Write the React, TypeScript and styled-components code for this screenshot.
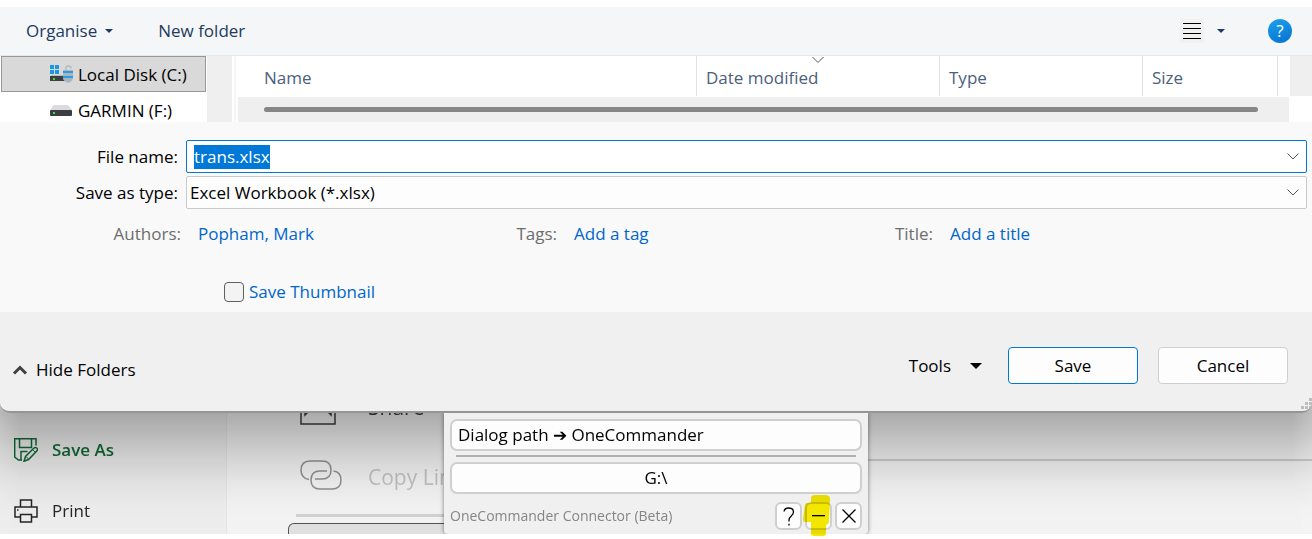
import React, { useEffect, useRef } from "react";
import styled, { createGlobalStyle } from "styled-components";

const GlobalStyle = createGlobalStyle`
  *, *::before, *::after { box-sizing: border-box; }
  body {
    margin: 0;
    background: #fff;
    color: #000;
    font: 17px/24px "Open Sans", "Noto Sans", sans-serif;
  }
  button, input, select { font: inherit; color: inherit; margin: 0; }
  svg { display: block; flex: none; }
`;

const Page = styled.div`
  padding: 7px 0 5px;
  overflow: hidden;
`;

/* ---------- Save dialog ---------- */

const Dialog = styled.form`
  position: relative;
  z-index: 1;
  border-bottom: 2px solid #959595;
  border-radius: 0 0 10px 10px;
  overflow: hidden;
`;

const Toolbar = styled.div`
  display: flex;
  align-items: center;
  height: 49px;
  padding: 0 20px 0 26px;
  background: #f4f6f8;
  border-bottom: 1px solid #e7e7e7;
  color: #1f3a60;
`;

const PlainButton = styled.button<{ $gap?: number }>`
  display: flex;
  align-items: center;
  gap: ${(p) => p.$gap ?? 8}px;
  padding: 0;
  border: 0;
  background: none;
  white-space: nowrap;
`;

const ToolbarLeft = styled.div`
  display: flex;
  gap: 45px;
  flex: 1;
`;

const ToolbarRight = styled.div`
  display: flex;
  align-items: center;
  gap: 43px;
`;

const ViewGlyph = styled.span`
  display: grid;
  place-items: center;
  width: 24px;
  height: 24px;
  background: #f1f1f1;
`;

const HelpButton = styled.button`
  width: 24px;
  height: 24px;
  padding: 0;
  border: 0;
  border-radius: 50%;
  background: linear-gradient(160deg, #1da1ea, #0671d3);
  color: #fff;
  line-height: 24px;
  text-align: center;
`;

const Browser = styled.div`
  display: flex;
  height: 66px;
  overflow: hidden;
  background: #fff;
`;

const FolderTree = styled.ul`
  flex: none;
  width: 207px;
  margin: 0;
  padding: 0 1px;
  list-style: none;
`;

const FolderItem = styled.li<{ $selected?: boolean }>`
  display: flex;
  align-items: center;
  gap: 4px;
  height: 36px;
  padding: 1px 0 0 48px;
  border: 1px solid ${(p) => (p.$selected ? "#979797" : "transparent")};
  background: ${(p) => (p.$selected ? "#d9d9d9" : "transparent")};
  white-space: nowrap;
`;

const TreeTrack = styled.div`
  flex: none;
  width: 25px;
  background: #efefef;
`;

const Splitter = styled.div`
  flex: none;
  width: 6px;
  border-left: 2px solid #fff;
  border-right: 2px solid #fff;
  background: #f6f6f6;
`;

const FileList = styled.div`
  flex: 1;
  display: flex;
  flex-direction: column;
`;

const HeaderRow = styled.div`
  display: flex;
  height: 41px;
  padding-bottom: 1px;
`;

const HeaderTable = styled.table`
  flex: 1;
  height: 40px;
  table-layout: fixed;
  border-collapse: collapse;
`;

const ColumnHead = styled.th<{ $width?: number; $indent?: number }>`
  position: relative;
  width: ${(p) => (p.$width ? `${p.$width}px` : "auto")};
  padding: 3px 0 0 ${(p) => p.$indent ?? 9}px;
  border-right: 1px solid #e2e2e2;
  color: #4c607c;
  font-weight: 400;
  text-align: left;
`;

const SortMark = styled.svg`
  position: absolute;
  top: 0;
  left: calc(50% - 6px);
`;

const HeaderEnd = styled.div<{ $shaded?: boolean }>`
  flex: none;
  width: ${(p) => (p.$shaded ? 22 : 12)}px;
  background: ${(p) => (p.$shaded ? "#efefef" : "#fff")};
`;

const ScrollTrack = styled.div`
  flex: 1;
  display: flex;
  align-items: center;
  margin-right: 23px;
  padding: 0 31px 0 26px;
  background: #efefef;
`;

const ScrollThumb = styled.div`
  flex: 1;
  height: 5px;
  border-radius: 3px;
  background: #868686;
`;

const Fields = styled.div`
  height: 190px;
  padding-top: 18px;
  background: #f9f9f9;
`;

const FieldRow = styled.div`
  display: flex;
  align-items: center;
  height: 33px;
  margin-bottom: 3px;
  padding-right: 5px;
`;

const FieldLabel = styled.label`
  flex: none;
  width: 178px;
  margin-right: 8px;
  text-align: right;
`;

const Combo = styled.div<{ $active?: boolean }>`
  flex: 1;
  display: flex;
  align-items: center;
  position: relative;
  height: 33px;
  border: 1px solid ${(p) => (p.$active ? "#0078d4" : "#cacaca")};
  border-radius: 2px;
  background: ${(p) => (p.$active ? "#fff" : "#fdfdfd")};
`;

const FileInput = styled.input`
  flex: 1;
  min-width: 0;
  padding: 0 7px;
  border: 0;
  outline: 0;
  background: none;
  &::selection { background: #0078d7; color: #fff; }
`;

const TypeSelect = styled.select`
  flex: 1;
  height: 31px;
  padding: 0 28px 0 3px;
  border: 0;
  outline: 0;
  appearance: none;
  background: none;
`;

const DropButton = styled.button`
  display: grid;
  place-items: center;
  width: 27px;
  height: 31px;
  padding: 0;
  border: 0;
  background: none;
`;

const DropMark = styled.span`
  position: absolute;
  top: 0;
  right: 0;
  display: grid;
  place-items: center;
  width: 27px;
  height: 31px;
  pointer-events: none;
`;

const Details = styled.dl`
  display: grid;
  grid-template-columns: repeat(3, 1fr);
  margin: 13px 184px 0 0;
`;

const Detail = styled.div`
  display: flex;
  gap: 17px;
`;

const DetailName = styled.dt`
  width: 181px;
  color: #6d6d6d;
  text-align: right;
`;

const DetailValue = styled.dd`
  margin: 0;
`;

const DetailLink = styled.a`
  color: #0066cc;
  text-decoration: none;
  white-space: nowrap;
`;

const ThumbnailOption = styled.label`
  display: flex;
  align-items: center;
  gap: 5px;
  margin: 34px 0 0 224px;
  color: #0066cc;
`;

const Checkbox = styled.input`
  width: 20px;
  height: 20px;
  appearance: none;
  border: 1px solid #606060;
  border-radius: 4px;
  background: #f3f3f3;
`;

const Footer = styled.div`
  display: flex;
  align-items: flex-end;
  justify-content: space-between;
  position: relative;
  height: 99px;
  padding: 0 24px 27px 12px;
  background: #f0f0f0;
`;

const FooterActions = styled.div`
  display: flex;
  gap: 20px;
`;

const ToolsButton = styled(PlainButton)`
  margin-right: 6px;
`;

const HideFolders = styled(PlainButton)`
  height: 29px;
`;

const ActionButton = styled.button<{ $primary?: boolean }>`
  width: 130px;
  height: 37px;
  padding: 0;
  border: 1px solid ${(p) => (p.$primary ? "#0078d4" : "#cfcfcf")};
  border-radius: 4px;
  background: #fdfdfd;
`;

const ResizeGrip = styled.svg`
  position: absolute;
  right: 0;
  bottom: 2px;
`;

/* ---------- Backstage view behind the dialog ---------- */

const Backstage = styled.div`
  position: relative;
  margin-top: -41px;
`;

const BackstageBody = styled.div`
  display: flex;
  position: relative;
  background: #f6f6f6;

  &::after {
    content: "";
    position: absolute;
    inset: 31px 0 0;
    background: linear-gradient(
      rgba(0, 0, 0, 0.3) 10px,
      rgba(0, 0, 0, 0.25) 25px,
      rgba(0, 0, 0, 0.15) 52px,
      rgba(0, 0, 0, 0.06) 80px,
      rgba(0, 0, 0, 0.02) 105px,
      rgba(0, 0, 0, 0.01)
    );
    mask-image: linear-gradient(90deg, rgba(0, 0, 0, 0.75), #000 20px, #000 calc(100% - 20px), rgba(0, 0, 0, 0.75));
    pointer-events: none;
  }
`;

const Sidebar = styled.nav`
  flex: none;
  display: flex;
  flex-direction: column;
  gap: 33px;
  width: 227px;
  height: 162px;
  padding: 64px 0 0 14px;
  overflow: hidden;
  background: #f0f0f0;
  border-right: 1px solid #e9e9e9;
`;

const SidebarLink = styled.a<{ $current?: boolean }>`
  display: flex;
  align-items: center;
  gap: 14px;
  height: 28px;
  color: ${(p) => (p.$current ? "#106a37" : "#262626")};
  font-weight: ${(p) => (p.$current ? 600 : 400)};
  text-decoration: none;
`;

const SharePane = styled.div`
  flex: none;
  width: 480px;
  padding-left: 61px;
  border-right: 2px solid #d0d0d0;
`;

const ShareOption = styled.button<{ $muted?: boolean }>`
  display: flex;
  align-items: center;
  gap: 26px;
  width: 100%;
  height: 70px;
  padding: 0 0 0 12px;
  border: 0;
  background: none;
  color: ${(p) => (p.$muted ? "#c4c4c4" : "#3c3c3c")};
  font-size: 21px;
`;

const ShareRule = styled.hr`
  height: 3px;
  margin: 2px 0 6px 8px;
  border: 0;
  background: #d4d4d4;
`;

const ShareCard = styled.div`
  height: 11px;
  border: 1px solid #555;
  border-bottom: 0;
  border-radius: 6px 6px 0 0;
  background: #e3e3e3;
`;

const InfoPane = styled.div`
  flex: 1;
  height: 89px;
  border-bottom: 2px solid #cfcfcf;
`;

/* ---------- OneCommander connector ---------- */

const ConnectorLayer = styled.div`
  display: flex;
  justify-content: center;
  position: absolute;
  inset: 41px 0 0;
`;

const Connector = styled.section`
  display: flex;
  flex-direction: column;
  width: 424px;
  padding: 6px 6px 4px;
  border-radius: 0 0 4px 4px;
  background: #f0f0f0;
  box-shadow: 0 0 4px rgba(0, 0, 0, 0.5);
  clip-path: inset(0 -8px 0 -8px);
`;

const PathButton = styled.button<{ $centered?: boolean }>`
  height: 32px;
  padding: 0 6px;
  border: 2px solid #cfcfcf;
  border-radius: 7px;
  background: #fdfdfd;
  line-height: 24px;
  text-align: ${(p) => (p.$centered ? "center" : "left")};
`;

const ConnectorRule = styled.hr`
  height: 2px;
  margin: 4px 6px 5px;
  border: 0;
  background: #b0b0b0;
`;

const ConnectorBar = styled.div`
  display: flex;
  align-items: center;
  gap: 3px;
  margin-top: 8px;
`;

const ConnectorTitle = styled.span`
  flex: 1;
  color: #858585;
  font-size: 14px;
`;

const SquareButton = styled.button`
  display: grid;
  place-items: center;
  width: 27px;
  height: 28px;
  padding: 0;
  border: 2px solid #cfcfcf;
  border-radius: 6px;
  background: #fdfdfd;
`;

const MarkerLayer = styled.div`
  display: flex;
  justify-content: flex-end;
  align-items: flex-end;
  position: absolute;
  left: 50%;
  bottom: -3px;
  width: 174px;
  mix-blend-mode: multiply;
  pointer-events: none;
`;

const Caret = ({ size }: { size: number }) => (
  <svg width={size} height={size / 2} viewBox="0 0 10 5" aria-hidden="true">
    <path d="M0 0H10L5 5Z" fill="currentColor" />
  </svg>
);

const Chevron = () => (
  <svg width="12" height="7" viewBox="0 0 12 7" fill="none" stroke="#555" aria-hidden="true">
    <path d="M0.5 0.5L6 6L11.5 0.5" />
  </svg>
);

const SystemDriveIcon = () => (
  <svg width="24" height="20" viewBox="0 0 24 20" aria-hidden="true">
    <path d="M0 0h4v4H0zM5 0h4v4H5zM0 5h4v4H0zM5 5h4v4H5z" fill="#1c96e0" />
    <path d="M1 10H14V12H0Z" fill="#b9bcc0" />
    <rect y="11" width="15" height="5" fill="#3c3f42" />
    <rect x="3" y="13" width="2" height="2" fill="#3fe03f" />
    <path d="M16 6V2.500Q16 1 18.500 1T21 2.500V3.500" fill="none" stroke="#b4bcc4" strokeWidth="1.500" />
    <path d="M13 5H23V13Q23 16 18 18Q13 16 13 13Z" fill="#a9b7c3" />
    <path d="M13 6H23V8H13ZM13 11H23V13H13Z" fill="#2d9be2" />
  </svg>
);

const RemovableDriveIcon = () => (
  <svg width="24" height="12" viewBox="0 0 24 12" aria-hidden="true">
    <path d="M4 0H18L22 5H0Z" fill="#d9dbde" />
    <rect y="5" width="22" height="6" rx="1" fill="#3b3d40" />
    <rect x="3" y="7" width="2" height="2" fill="#3fe03f" />
  </svg>
);

const SaveAsIcon = () => (
  <svg width="24" height="24" viewBox="0 0 24 24" fill="none" stroke="currentColor" strokeWidth="1.500" aria-hidden="true">
    <path d="M22 7.500V0.700H0.700V19L4.500 22H7V13.500H13.500" />
    <path d="M5.500 1V9.500H17.500V1" />
    <path d="M7 22H8" />
    <path d="M10 23.200L11.500 18.500L20 10Q21.500 9 22.700 10T23 12.700L14.500 21.500Z" />
    <path d="M12 18.500L14.500 21M18.500 11.500L21 14" strokeWidth="1" />
  </svg>
);

const PrintIcon = () => (
  <svg width="24" height="24" viewBox="0 0 24 24" fill="none" stroke="currentColor" strokeWidth="1.500" aria-hidden="true">
    <path d="M6.500 8V1H17.500V8" />
    <path d="M6.500 18H1V8H23V18H17.500" />
    <path d="M6.500 15.500H17.500V23H6.500Z" />
    <path d="M3 11H4.500" />
  </svg>
);

const ShareIcon = () => (
  <svg width="42" height="36" viewBox="0 0 42 36" fill="none" stroke="currentColor" strokeWidth="1.500" aria-hidden="true">
    <path d="M1 14V35H35V14" />
    <path d="M5 14V26L10 21M31 14V26L26 21" />
  </svg>
);

const LinkIcon = () => (
  <svg width="42" height="34" viewBox="0 0 42 34" fill="none" stroke="#929292" strokeWidth="1.500" aria-hidden="true">
    <path d="M9 19.500C4 19 1 15 1 10.500Q1 1 10 1H22Q31 1 31 10T22 19H15" />
    <path d="M27 11H20Q11 11 11 20T20 29H32Q41 29 41 20Q41 12 33.500 11" />
  </svg>
);

const details = [
  { name: "Authors:", value: "Popham, Mark" },
  { name: "Tags:", value: "Add a tag" },
  { name: "Title:", value: "Add a title" },
];

export default function App() {
  const fileName = useRef<HTMLInputElement>(null);

  useEffect(() => {
    fileName.current?.focus();
    fileName.current?.select();
  }, []);

  return (
    <Page>
      <GlobalStyle />
      <Dialog onSubmit={(e) => e.preventDefault()}>
        <Toolbar>
          <ToolbarLeft>
            <PlainButton type="button">
              Organise
              <Caret size={8} />
            </PlainButton>
            <PlainButton type="button">New folder</PlainButton>
          </ToolbarLeft>
          <ToolbarRight>
            <PlainButton type="button" $gap={13} aria-label="Change your view">
              <ViewGlyph>
                <svg width="18" height="16" viewBox="0 0 18 16" stroke="#000" aria-hidden="true">
                  <path d="M0 .5H18M0 5.500H18M0 10.500H18M0 15.500H18" />
                </svg>
              </ViewGlyph>
              <Caret size={8} />
            </PlainButton>
            <HelpButton type="button">?</HelpButton>
          </ToolbarRight>
        </Toolbar>

        <Browser>
          <FolderTree>
            <FolderItem $selected>
              <SystemDriveIcon />
              Local Disk (C:)
            </FolderItem>
            <FolderItem>
              <RemovableDriveIcon />
              GARMIN (F:)
            </FolderItem>
          </FolderTree>
          <TreeTrack />
          <Splitter />
          <FileList>
            <HeaderRow>
              <HeaderTable>
                <thead>
                  <tr>
                    <ColumnHead $indent={26}>Name</ColumnHead>
                    <ColumnHead $width={243}>
                      Date modified
                      <SortMark width="12" height="8" viewBox="0 0 12 8" fill="none" stroke="#555">
                        <path d="M0.500 1L6 6.500L11.500 1" />
                      </SortMark>
                    </ColumnHead>
                    <ColumnHead $width={203}>Type</ColumnHead>
                    <ColumnHead $width={135}>Size</ColumnHead>
                  </tr>
                </thead>
              </HeaderTable>
              <HeaderEnd />
              <HeaderEnd $shaded />
            </HeaderRow>
            <ScrollTrack>
              <ScrollThumb />
            </ScrollTrack>
          </FileList>
        </Browser>

        <Fields>
          <FieldRow>
            <FieldLabel htmlFor="file-name">File name:</FieldLabel>
            <Combo $active>
              <FileInput id="file-name" ref={fileName} defaultValue="trans.xlsx" spellCheck={false} autoComplete="off" />
              <DropButton type="button" aria-label="Recent names">
                <Chevron />
              </DropButton>
            </Combo>
          </FieldRow>
          <FieldRow>
            <FieldLabel htmlFor="file-type">Save as type:</FieldLabel>
            <Combo>
              <TypeSelect id="file-type">
                <option>Excel Workbook (*.xlsx)</option>
              </TypeSelect>
              <DropMark>
                <Chevron />
              </DropMark>
            </Combo>
          </FieldRow>
          <Details>
            {details.map((d) => (
              <Detail key={d.name}>
                <DetailName>{d.name}</DetailName>
                <DetailValue>
                  <DetailLink href="#">{d.value}</DetailLink>
                </DetailValue>
              </Detail>
            ))}
          </Details>
          <ThumbnailOption>
            <Checkbox type="checkbox" />
            Save Thumbnail
          </ThumbnailOption>
        </Fields>

        <Footer>
          <HideFolders type="button">
            <svg width="16" height="10" viewBox="0 0 16 10" fill="none" stroke="#404040" strokeWidth="3" aria-hidden="true">
              <path d="M2 8.500L8 2.500L14 8.500" />
            </svg>
            Hide Folders
          </HideFolders>
          <FooterActions>
            <ToolsButton type="button" $gap={19}>
              Tools
              <Caret size={12} />
            </ToolsButton>
            <ActionButton type="submit" $primary>
              Save
            </ActionButton>
            <ActionButton type="button">Cancel</ActionButton>
          </FooterActions>
          <ResizeGrip width="11" height="11" viewBox="0 0 11 11" fill="#bdbdbd" aria-hidden="true">
            <path d="M8 0h3v3H8zM4 4h3v3H4zM8 4h3v3H8zM0 8h3v3H0zM4 8h3v3H4zM8 8h3v3H8z" />
          </ResizeGrip>
        </Footer>
      </Dialog>

      <Backstage>
        <BackstageBody>
          <Sidebar>
            <SidebarLink href="#" $current>
              <SaveAsIcon />
              Save As
            </SidebarLink>
            <SidebarLink href="#">
              <PrintIcon />
              Print
            </SidebarLink>
          </Sidebar>
          <SharePane>
            <ShareOption type="button">
              <ShareIcon />
              Share
            </ShareOption>
            <ShareOption type="button" $muted>
              <LinkIcon />
              Copy Link
            </ShareOption>
            <ShareRule />
            <ShareCard />
          </SharePane>
          <InfoPane />
        </BackstageBody>
        <ConnectorLayer>
          <Connector>
            <PathButton type="button">Dialog path ➔ OneCommander</PathButton>
            <ConnectorRule />
            <PathButton type="button" $centered>
              G:\
            </PathButton>
            <ConnectorBar>
              <ConnectorTitle>OneCommander Connector (Beta)</ConnectorTitle>
              <SquareButton type="button" aria-label="Help">
                <svg width="12" height="19" viewBox="0 0 12 19" fill="none" stroke="#000" strokeWidth="1.300">
                  <path d="M1 4.500Q1.500 1 5.500 1Q10.500 1 10.500 5C10.500 9 6 9 6 13V14.500M6 16.800V18.500" />
                </svg>
              </SquareButton>
              <SquareButton type="button" aria-label="Minimise">
                <svg width="13" height="2" viewBox="0 0 13 2">
                  <path d="M0 0H13V1.300H0Z" fill="#000" />
                </svg>
              </SquareButton>
              <SquareButton type="button" aria-label="Close">
                <svg width="14" height="14" viewBox="0 0 14 14" stroke="#000" strokeWidth="1.300">
                  <path d="M0.500 0.500L13.500 13.500M13.500 0.500L0.500 13.500" />
                </svg>
              </SquareButton>
            </ConnectorBar>
          </Connector>
        </ConnectorLayer>
        <MarkerLayer>
          <svg width="27" height="42" viewBox="0 0 27 42" aria-hidden="true">
            <path
              d="M8 3Q8 0 12 0H22Q27 0 27 4L26 26Q26 29 23 30V38Q23 41 20 41H11Q8 41 8 38V27H2Q0 27 0 24L2 10Q2 8 4 8H8Z"
              fill="#f5e800"
            />
          </svg>
        </MarkerLayer>
      </Backstage>
    </Page>
  );
}
